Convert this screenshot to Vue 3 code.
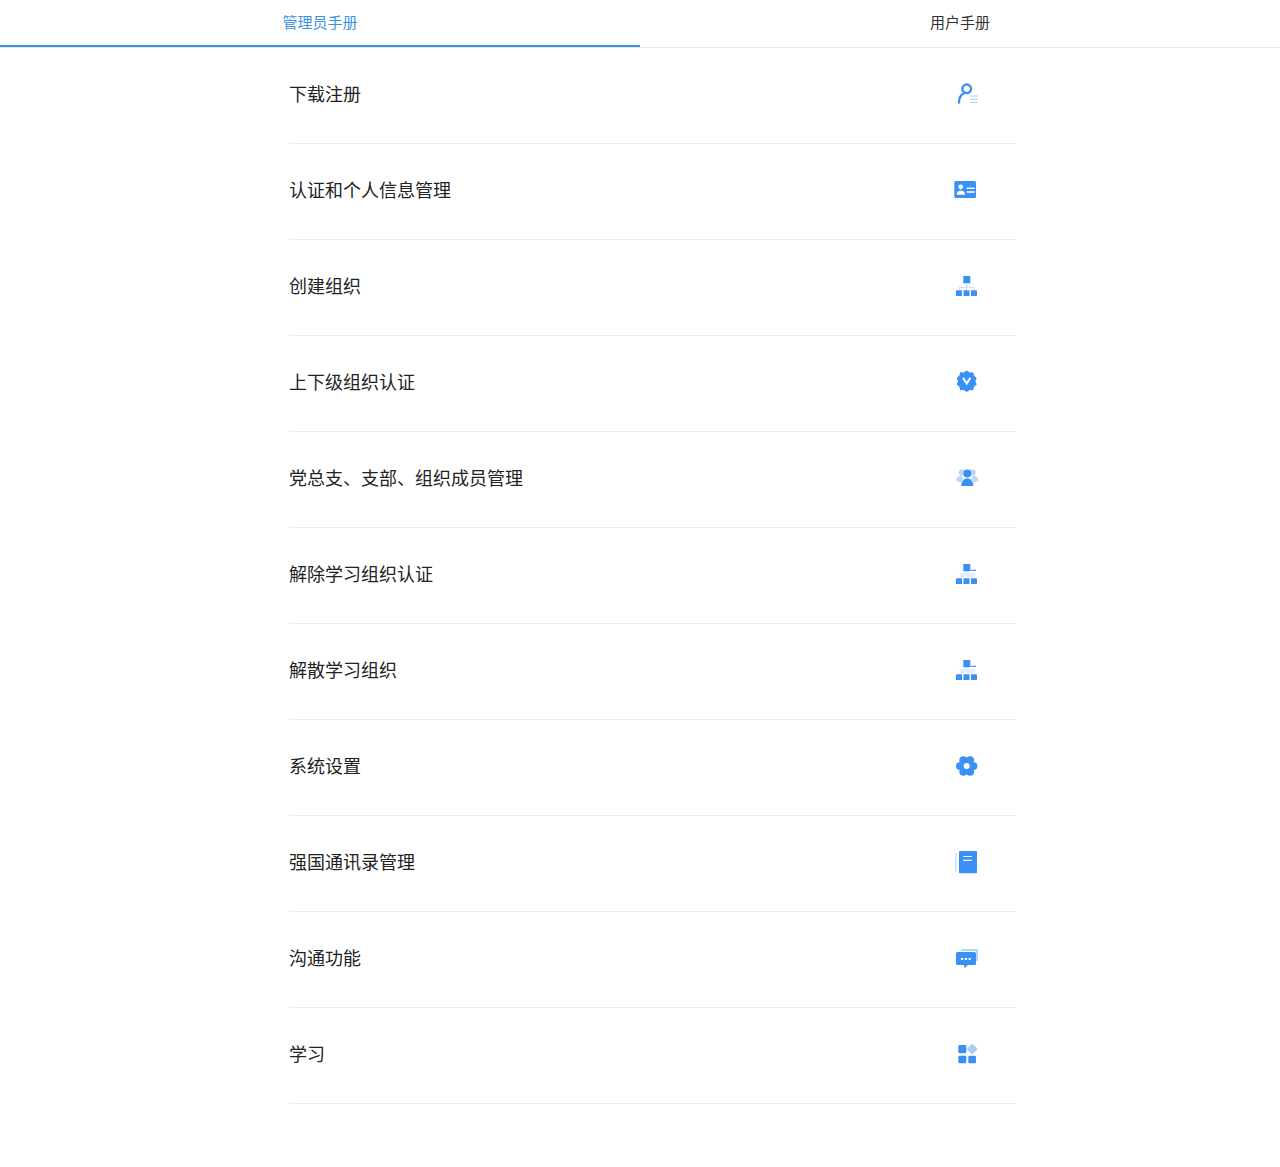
<script setup>
const items = [
  { title: '下载注册', icon: 'user' },
  { title: '认证和个人信息管理', icon: 'card' },
  { title: '创建组织', icon: 'org' },
  { title: '上下级组织认证', icon: 'badge' },
  { title: '党总支、支部、组织成员管理', icon: 'group' },
  { title: '解除学习组织认证', icon: 'orgline' },
  { title: '解散学习组织', icon: 'orgline' },
  { title: '系统设置', icon: 'gear' },
  { title: '强国通讯录管理', icon: 'book' },
  { title: '沟通功能', icon: 'chat' },
  { title: '学习', icon: 'apps' }
]
</script>

<template>
  <div class="page">
    <nav class="tabs">
      <div class="tab active">管理员手册</div>
      <div class="tab">用户手册</div>
    </nav>
    <ul class="list">
      <li v-for="item in items" :key="item.title" class="row">
        <span class="title">{{ item.title }}</span>
        <svg class="icon" width="28" height="28" viewBox="0 0 28 28">
          <g v-if="item.icon === 'user'">
            <circle cx="13.700" cy="8.800" r="4.300" fill="none" stroke="#3b90f5" stroke-width="2.400" />
            <path d="M6 22.500c0-4.500 2.300-8 4.800-9.300" fill="none" stroke="#3b90f5" stroke-width="2.400" stroke-linecap="round" />
            <path d="M17 16h8M17 19.300h8M17 22.500h8" stroke="#a9cff9" stroke-width="1" />
          </g>
          <g v-else-if="item.icon === 'card'">
            <rect x="1.300" y="5" width="21.700" height="17" rx="1.500" fill="#3b90f5" />
            <circle cx="7.700" cy="10.800" r="2.400" fill="#fff" />
            <path d="M3.700 18.800c0-5.600 8.300-5.600 8.300 0z" fill="#fff" />
            <path d="M13.700 12.300h8M13.700 16h8" stroke="#fff" stroke-width="1.600" />
          </g>
          <g v-else-if="item.icon === 'org' || item.icon === 'orgline'">
            <rect x="10.300" y="4" width="7" height="7.300" fill="#3b90f5" />
            <path v-if="item.icon === 'org'" d="M13.700 11.300v4M6.300 18v-2.700h14.700V18M13.700 15.300V18" fill="none" stroke="#c4defb" stroke-width="1" />
            <template v-else>
              <path d="M17.700 10.300H23" stroke="#3b90f5" stroke-width="1.200" />
              <path d="M6.500 14H22M6.500 16H22" stroke="#c4defb" stroke-width="1" />
            </template>
            <rect x="3" y="18.300" width="6" height="5.700" rx="0.500" fill="#3b90f5" />
            <rect x="10.500" y="18.300" width="6" height="5.700" rx="0.500" fill="#3b90f5" />
            <rect x="18" y="18.300" width="6" height="5.700" rx="0.500" fill="#3b90f5" />
          </g>
          <g v-else-if="item.icon === 'badge'">
            <path d="M13.700 2.500l3 1.900 3.500-.2.800 3.400 2.700 2.300-1.300 3.300 1.300 3.300-2.700 2.300-.8 3.400-3.500-.2-3 1.900-3-1.900-3.500.2-.8-3.400-2.700-2.300 1.300-3.300-1.300-3.300 2.700-2.300.8-3.400 3.500.2z" fill="#3b90f5" />
            <path d="M10 9.800l3.700 5.800 3.700-5.800" fill="none" stroke="#fff" stroke-width="2" />
          </g>
          <g v-else-if="item.icon === 'group'">
            <circle cx="9" cy="8.500" r="3.200" fill="#bcd9fb" />
            <circle cx="19.500" cy="8.500" r="3.200" fill="#bcd9fb" />
            <path d="M3 16.500c0-3 2.500-4.500 5.500-5l2 4-3 3.500zM25.500 16.500c0-3-2.500-4.500-5.500-5l-2 4 3 3.500z" fill="#bcd9fb" />
            <circle cx="14.300" cy="9.500" r="3.900" fill="#3b90f5" />
            <path d="M8.200 22c0-4 2-6.500 4.500-7.500h3.200c2.500 1 4.500 3.500 4.500 7.500z" fill="#3b90f5" />
          </g>
          <g v-else-if="item.icon === 'gear'">
            <circle cx="13.700" cy="14" r="7" fill="#3b90f5" />
            <circle cx="20.400" cy="14" r="4" fill="#3b90f5" />
            <circle cx="7" cy="14" r="4" fill="#3b90f5" />
            <circle cx="17.050" cy="8.200" r="4" fill="#3b90f5" />
            <circle cx="10.350" cy="8.200" r="4" fill="#3b90f5" />
            <circle cx="17.050" cy="19.800" r="4" fill="#3b90f5" />
            <circle cx="10.350" cy="19.800" r="4" fill="#3b90f5" />
            <circle cx="13.700" cy="14" r="3" fill="#fff" />
          </g>
          <g v-else-if="item.icon === 'book'">
            <rect x="2" y="5" width="1.700" height="19" fill="#cfe3fc" />
            <rect x="6" y="3" width="18" height="22.300" rx="1" fill="#3b90f5" />
            <path d="M10.300 8.500h8.400M10.300 12.300h8.400" stroke="#fff" stroke-width="1.200" />
          </g>
          <g v-else-if="item.icon === 'chat'">
            <path d="M8 5h17v12h-2V7H8z" fill="#b5d6fb" />
            <path d="M4.500 8h17a1.500 1.500 0 0 1 1.500 1.500v10a1.500 1.500 0 0 1-1.500 1.500h-6.500l-3.500 3.200-.5-3.200H4.500A1.500 1.500 0 0 1 3 19.500v-10A1.500 1.500 0 0 1 4.500 8z" fill="#3b90f5" />
            <path d="M8 15h2.200M11.800 15h2.200M15.600 15h2.200" stroke="#fff" stroke-width="2" />
          </g>
          <g v-else>
            <rect x="5.300" y="5" width="8" height="8.300" rx="1.200" fill="#3b90f5" />
            <rect x="15.200" y="5" width="8" height="8" rx="1.200" transform="rotate(45 19.200 9)" fill="#a9cff9" />
            <rect x="5.300" y="15.700" width="8" height="7.600" rx="1.200" fill="#3b90f5" />
            <rect x="15.300" y="15.700" width="7.700" height="7.600" rx="1.200" fill="#3b90f5" />
          </g>
        </svg>
      </li>
    </ul>
  </div>
</template>

<style>
html, body { margin: 0; background: #fff; }
</style>

<style scoped>
.page {
  min-height: 1167px;
  font-family: "Noto Sans CJK SC", "Liberation Sans", sans-serif;
  color: #222;
}
.tabs {
  display: flex;
  height: 47px;
  border-bottom: 1px solid #e8e8e8;
}
.tab {
  flex: 1;
  height: 47px;
  box-sizing: border-box;
  font-size: 15px;
  line-height: 44px;
  text-align: center;
  color: #333;
}
.tab.active {
  color: #3a93e0;
  border-bottom: 2px solid #3a93e0;
}
.list {
  list-style: none;
  margin: 0 0 0 288.500px;
  padding: 0;
  width: 727px;
}
.row {
  display: flex;
  align-items: center;
  justify-content: space-between;
  box-sizing: border-box;
  height: 96px;
  padding-right: 34.500px;
  border-bottom: 1px solid #ececec;
}
.title {
  font-size: 18px;
  line-height: 26px;
  margin-top: -5px;
  padding-left: 0.500px;
}
.icon {
  display: block;
  flex: none;
  margin-top: -3px;
}
</style>
